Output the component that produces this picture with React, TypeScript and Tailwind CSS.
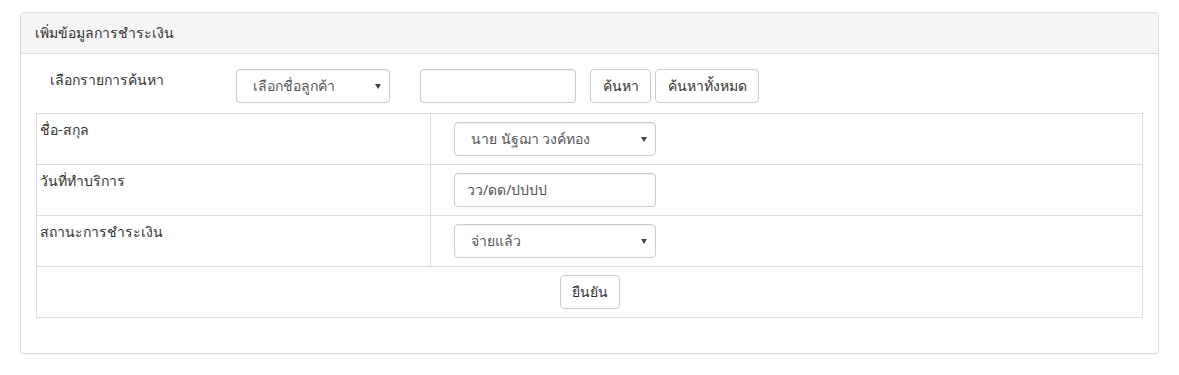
import React from "react";

function Arrow() {
  return (
    <svg width="6" height="5" viewBox="0 0 6 5" className="shrink-0">
      <path d="M0 0 L6 0 L3 5 Z" fill="#444" />
    </svg>
  );
}

function SelectBox({ text, className }: { text: string; className: string }) {
  return (
    <div
      className={
        "h-[34px] flex items-center justify-between border border-[#ccc] rounded-[4px] bg-white pl-[16px] pr-[8px] text-[#555] shadow-[inset_0_1px_1px_rgba(0,0,0,0.075)] whitespace-nowrap " +
        className
      }
    >
      <span>{text}</span>
      <Arrow />
    </div>
  );
}

function Btn({ text, className = "" }: { text: string; className?: string }) {
  return (
    <div
      className={
        "h-[34px] flex items-center justify-center border border-[#ccc] rounded-[4px] bg-white text-[#333] whitespace-nowrap " +
        className
      }
    >
      {text}
    </div>
  );
}

export default function App() {
  return (
    <div
      className="bg-white w-[1179px] h-[375px] pt-[12px] px-[20px] text-[14px] text-[#333] leading-[20px]"
      style={{ fontFamily: '"Noto Sans", "Liberation Sans", Tahoma, sans-serif' }}
    >
      <div className="w-[1139px] border border-[#ddd] rounded-[4px] shadow-[0_1px_1px_rgba(0,0,0,0.05)]">
        <div className="h-[41px] bg-[#f5f5f5] border-b border-[#ddd] rounded-t-[3px] px-[14px] flex items-center">
          เพิ่มข้อมูลการชำระเงิน
        </div>
        <div className="p-[15px]">
          <div className="flex items-start h-[34px]">
            <div className="w-[200px] pl-[14px] pt-[1px]">เลือกรายการค้นหา</div>
            <SelectBox text="เลือกชื่อลูกค้า" className="w-[154px]" />
            <div className="w-[156px] h-[34px] ml-[30px] border border-[#ccc] rounded-[4px] shadow-[inset_0_1px_1px_rgba(0,0,0,0.075)]" />
            <Btn text="ค้นหา" className="ml-[14px] w-[61px]" />
            <Btn text="ค้นหาทั้งหมด" className="ml-[4px] w-[104px]" />
          </div>
          <div className="mt-[10px] mb-[20px] border border-[#ddd]">
            <div className="flex h-[51px] border-b border-[#ddd]">
              <div className="w-[394px] border-r border-[#ddd] pl-[3px] pt-[6px]">ชื่อ-สกุล</div>
              <div className="pl-[23px] pt-[8px]">
                <SelectBox text="นาย นัฐฌา วงค์ทอง" className="w-[202px]" />
              </div>
            </div>
            <div className="flex h-[51px] border-b border-[#ddd]">
              <div className="w-[394px] border-r border-[#ddd] pl-[3px] pt-[6px]">วันที่ทำบริการ</div>
              <div className="pl-[23px] pt-[8px]">
                <div className="w-[202px] h-[34px] border border-[#ccc] rounded-[4px] flex items-center pl-[12px] text-[#555] shadow-[inset_0_1px_1px_rgba(0,0,0,0.075)]">
                  วว/ดด/ปปปป
                </div>
              </div>
            </div>
            <div className="flex h-[51px] border-b border-[#ddd]">
              <div className="w-[394px] border-r border-[#ddd] pl-[3px] pt-[6px]">สถานะการชำระเงิน</div>
              <div className="pl-[23px] pt-[8px]">
                <SelectBox text="จ่ายแล้ว" className="w-[202px]" />
              </div>
            </div>
            <div className="h-[50px] flex justify-center pt-[8px]">
              <Btn text="ยืนยัน" className="w-[60px]" />
            </div>
          </div>
        </div>
      </div>
    </div>
  );
}
